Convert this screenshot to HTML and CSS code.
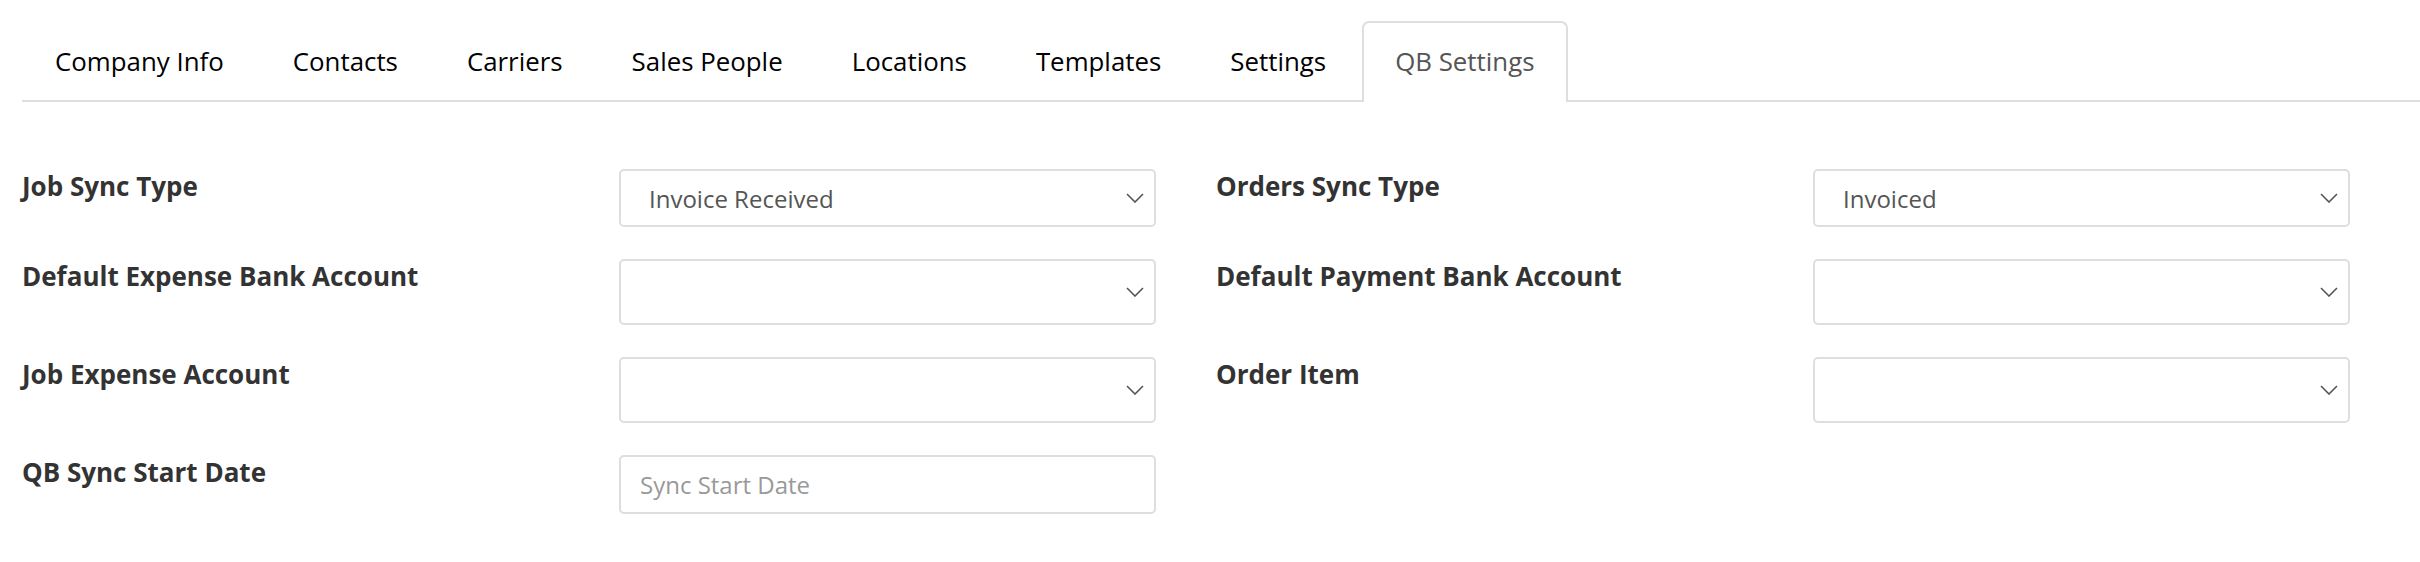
FILE: index.html
```html
<!DOCTYPE html>
<html lang="en">
<head>
<meta charset="utf-8">
<title>QB Settings</title>
<link rel="stylesheet" href="styles.css">
</head>
<body>
<div class="page">
  <ul class="tabs">
    <li class="tab">Company Info</li>
    <li class="tab">Contacts</li>
    <li class="tab">Carriers</li>
    <li class="tab">Sales People</li>
    <li class="tab">Locations</li>
    <li class="tab">Templates</li>
    <li class="tab">Settings</li>
    <li class="tab active">QB Settings</li>
  </ul>

  <form class="form">
    <div class="row">
      <div class="field">
        <label class="label">Job Sync Type</label>
        <div class="select short"><span class="value">Invoice Received</span><svg class="chev" viewBox="0 0 18 10"><path d="M1 1 L9 9 L17 1"/></svg></div>
      </div>
      <div class="field">
        <label class="label">Orders Sync Type</label>
        <div class="select short"><span class="value">Invoiced</span><svg class="chev" viewBox="0 0 18 10"><path d="M1 1 L9 9 L17 1"/></svg></div>
      </div>
    </div>
    <div class="row">
      <div class="field">
        <label class="label">Default Expense Bank Account</label>
        <div class="select tall"><span class="value"></span><svg class="chev" viewBox="0 0 18 10"><path d="M1 1 L9 9 L17 1"/></svg></div>
      </div>
      <div class="field">
        <label class="label">Default Payment Bank Account</label>
        <div class="select tall"><span class="value"></span><svg class="chev" viewBox="0 0 18 10"><path d="M1 1 L9 9 L17 1"/></svg></div>
      </div>
    </div>
    <div class="row">
      <div class="field">
        <label class="label">Job Expense Account</label>
        <div class="select tall"><span class="value"></span><svg class="chev" viewBox="0 0 18 10"><path d="M1 1 L9 9 L17 1"/></svg></div>
      </div>
      <div class="field">
        <label class="label">Order Item</label>
        <div class="select tall"><span class="value"></span><svg class="chev" viewBox="0 0 18 10"><path d="M1 1 L9 9 L17 1"/></svg></div>
      </div>
    </div>
    <div class="row">
      <div class="field">
        <label class="label">QB Sync Start Date</label>
        <input class="input" type="text" placeholder="Sync Start Date">
      </div>
    </div>
  </form>
</div>
</body>
</html>
```

FILE: styles.css
```css
* { box-sizing: border-box; }

html, body {
  margin: 0;
  padding: 0;
  background: #fff;
  font-family: "Open Sans", "Noto Sans", sans-serif;
}

.page {
  padding-top: 21px;
}

.tabs {
  list-style: none;
  margin: 0 0 0 22px;
  padding: 0;
  display: flex;
  border-bottom: 2px solid #dedede;
}

.tab {
  height: 79px;
  padding: 0 31px 2px;
  margin-right: 3px;
  display: flex;
  align-items: center;
  font-size: 25.85px;
  color: #000;
  border: 2px solid transparent;
  border-bottom: 0;
}

.tab.active {
  height: 81px;
  margin-bottom: -2px;
  padding-bottom: 4px;
  background: #fff;
  border-color: #dedede;
  border-radius: 7px 7px 0 0;
  color: #555;
}

.form {
  padding: 67px 0 0 22px;
  display: flex;
  flex-direction: column;
  gap: 32px;
}

.row {
  display: flex;
  gap: 60px;
}

.field {
  display: grid;
  grid-template-columns: 597px 537px;
  align-items: start;
}

.label {
  font-size: 26px;
  font-weight: 700;
  line-height: 34px;
  color: #333;
}

.select {
  display: flex;
  align-items: center;
  justify-content: space-between;
  border: 2px solid #dedede;
  border-radius: 5px;
  padding: 0 10px 0 28px;
  background: #fff;
}

.select.short { height: 58px; }
.select.tall { height: 66px; }

.value {
  font-size: 24px;
  color: #555;
}

.chev {
  width: 18px;
  height: 10px;
  fill: none;
  stroke: #555;
  stroke-width: 1.6;
}

.input {
  height: 59px;
  width: 537px;
  border: 2px solid #dedede;
  border-radius: 5px;
  padding: 0 19px;
  font-family: "Open Sans", "Noto Sans", sans-serif;
  font-size: 24px;
  color: #555;
  outline: none;
}

.input::placeholder {
  color: #999;
}
```
